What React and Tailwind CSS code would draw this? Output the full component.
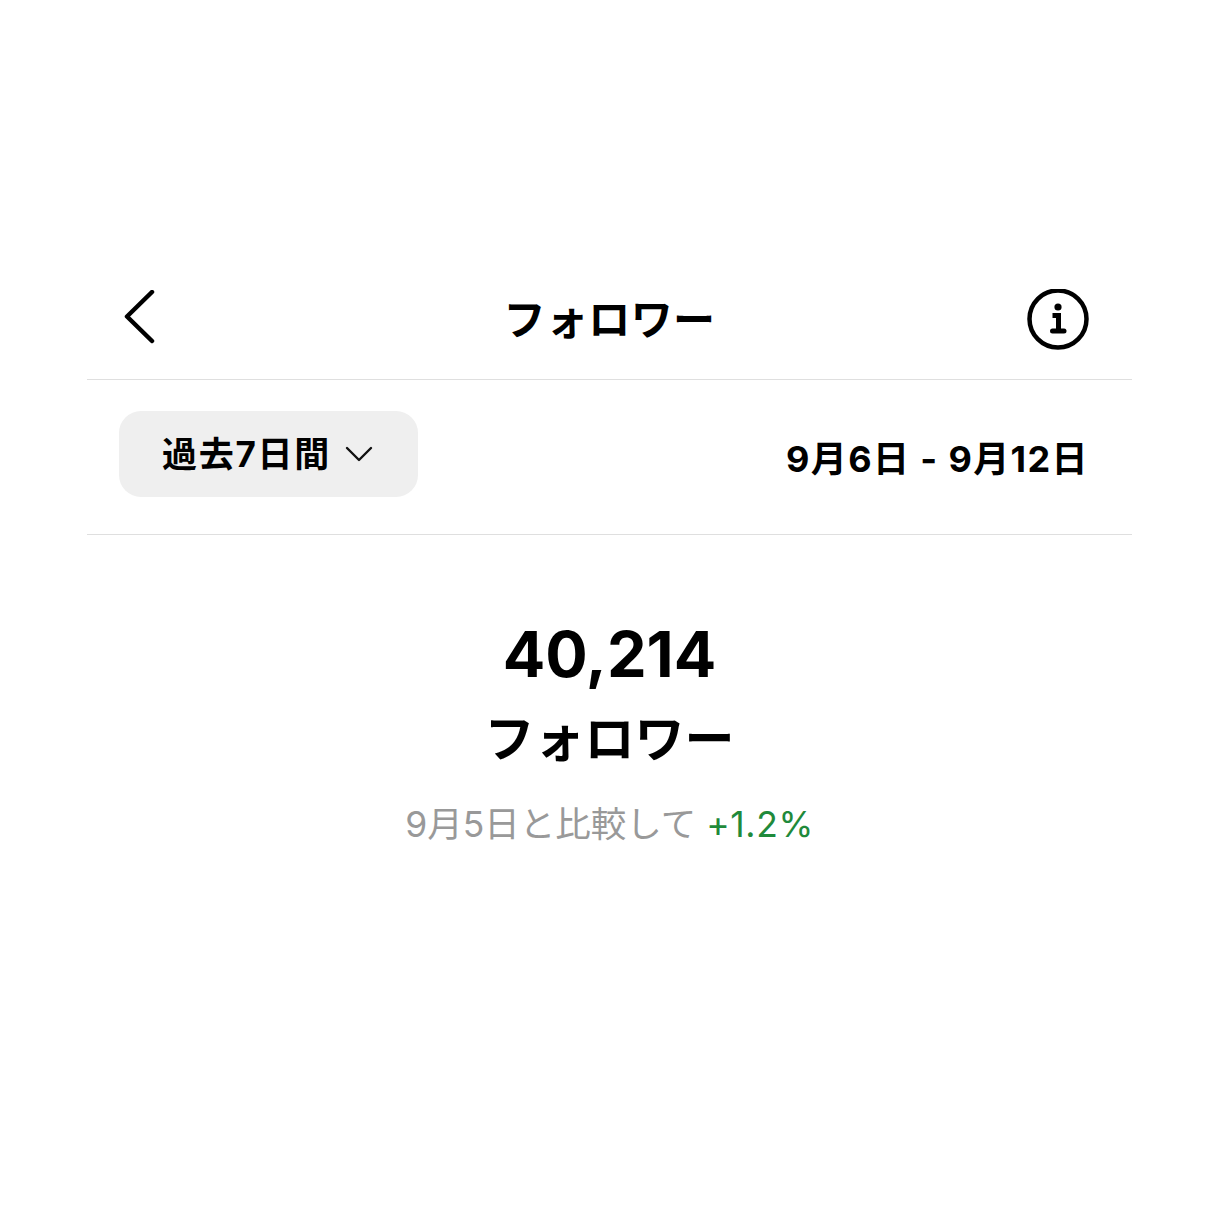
const jp = { fontFamily: '"Inter", "Noto Sans CJK JP", sans-serif' };

const App = () => {
  return (
    <div className="min-h-[1220px] bg-white text-black pt-[272px] px-[87px]" style={jp}>
      <div className="w-[1045px]">
        <div className="grid grid-cols-[1fr_auto_1fr] items-center h-[108px] pb-[12px] px-[33px] border-b border-[#dfdfdf]">
          <svg width="36" height="60" viewBox="0 0 36 60" fill="none" stroke="#000" strokeWidth="4.5" strokeLinecap="round" strokeLinejoin="round">
            <path d="M32 5 L7 29.5 L32 54" transform="translate(0 -3)" />
          </svg>
          <h1 className="text-[42px] font-bold leading-none tracking-[0.4px]">フォロワー</h1>
          <svg className="justify-self-end mr-[10px]" width="62" height="62" viewBox="0 0 62 62" fill="none">
            <circle cx="31" cy="30" r="28.5" stroke="#000" strokeWidth="4.5" />
            <circle cx="31" cy="18" r="3.6" fill="#000" />
            <path d="M25.5 26.5 H31.5 V41" stroke="#000" strokeWidth="5" />
            <path d="M25.5 42 H37" stroke="#000" strokeWidth="5" strokeLinecap="round" />
          </svg>
        </div>
        <div className="flex items-center justify-between h-[155px] pb-[6px] pl-[32px] pr-[43px] border-b border-[#dfdfdf]">
          <div className="flex items-center gap-[14px] w-[299px] h-[86px] pl-[43px] bg-[#efefef] rounded-[22px]">
            <span className="text-[35px] font-bold leading-none tracking-[1.7px]">過去7日間</span>
            <svg width="28" height="16" viewBox="0 0 28 16" fill="none" stroke="#111" strokeWidth="2.4" strokeLinecap="round" strokeLinejoin="round">
              <path d="M2 2 L14 14 L26 2" />
            </svg>
          </div>
          <span className="text-[36px] font-bold leading-none tracking-[1.4px] pt-[10px]">9月6日 - 9月12日</span>
        </div>
        <div className="flex flex-col items-center pt-[88px]">
          <div className="text-[63px] font-bold leading-none">40,214</div>
          <div className="text-[50px] font-bold leading-none mt-[28px]">フォロワー</div>
          <div className="text-[35.5px] leading-none mt-[43px] text-[#999999]">
            9月5日と比較して <span className="text-[#1f8a3b] tracking-[0.6px]">+1.2%</span>
          </div>
        </div>
      </div>
    </div>
  );
};

export default App;
